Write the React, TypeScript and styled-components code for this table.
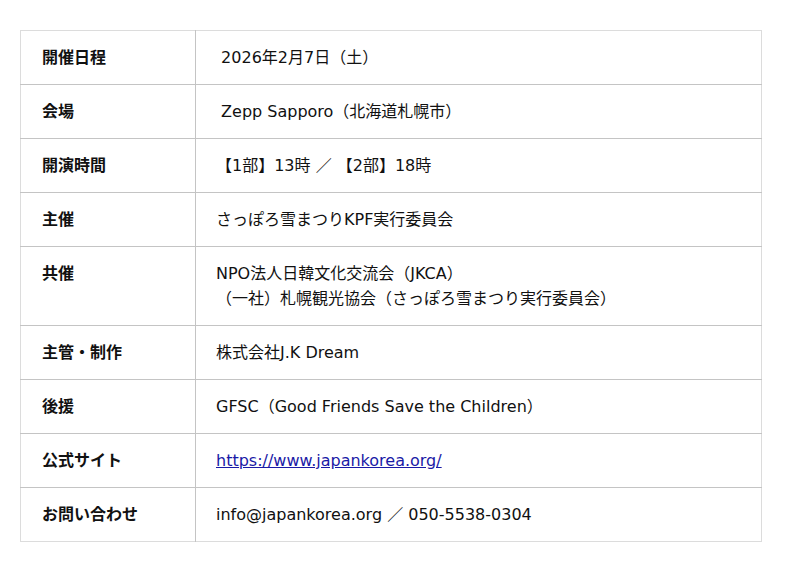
import React from "react";
import styled, { createGlobalStyle } from "styled-components";

const GlobalStyle = createGlobalStyle`
  html, body {
    margin: 0;
    padding: 0;
    background: #fff;
  }
  body {
    font-family: "DejaVu Sans", "Noto Sans CJK JP", sans-serif;
    color: #111;
  }
`;

type Item = {
  label: string;
  lines: string[];
  href?: string;
};

const items: Item[] = [
  { label: "開催日程", lines: ["\u00a02026年2月7日（土）"] },
  { label: "会場", lines: ["\u00a0Zepp Sapporo（北海道札幌市）"] },
  { label: "開演時間", lines: ["【1部】13時 ／ 【2部】18時"] },
  { label: "主催", lines: ["さっぽろ雪まつりKPF実行委員会"] },
  {
    label: "共催",
    lines: [
      "NPO法人日韓文化交流会（JKCA）",
      "（一社）札幌観光協会（さっぽろ雪まつり実行委員会）",
    ],
  },
  { label: "主管・制作", lines: ["株式会社J.K Dream"] },
  { label: "後援", lines: ["GFSC（Good Friends Save the Children）"] },
  {
    label: "公式サイト",
    lines: ["https://www.japankorea.org/"],
    href: "https://www.japankorea.org/",
  },
  { label: "お問い合わせ", lines: ["info@japankorea.org ／ 050-5538-0304"] },
];

function App() {
  return (
    <Page>
      <GlobalStyle />
      <InfoTable>
        <colgroup>
          <col style={{ width: 175 }} />
          <col />
        </colgroup>
        <tbody>
          {items.map((item) => (
            <Row key={item.label}>
              <Label>{item.label}</Label>
              <Value>
                {item.href ? (
                  <Link href={item.href}>{item.lines[0]}</Link>
                ) : (
                  item.lines.map((line, i) => <Line key={i}>{line}</Line>)
                )}
              </Value>
            </Row>
          ))}
        </tbody>
      </InfoTable>
    </Page>
  );
}

const Page = styled.div`
  padding: 30px 38px 30px 20px;
`;

const InfoTable = styled.table`
  width: 742px;
  table-layout: fixed;
  border-collapse: collapse;
  border: 1px solid #dcdcdc;
  font-size: 16px;
  line-height: 25px;
`;

const Row = styled.tr`
  border-bottom: 1px solid #c4c4c4;

  &:last-child {
    border-bottom: 1px solid #dcdcdc;
  }
`;

const Label = styled.th`
  padding: 14px 0 14px 21px;
  text-align: left;
  vertical-align: top;
  font-weight: bold;
  border-right: 1px solid #c4c4c4;
`;

const Value = styled.td`
  padding: 14px 20px 14px 20px;
  vertical-align: top;
  white-space: pre;
`;

const Line = styled.div``;

const Link = styled.a`
  color: #1a1aa6;
  text-decoration: underline;
`;

export default App;
